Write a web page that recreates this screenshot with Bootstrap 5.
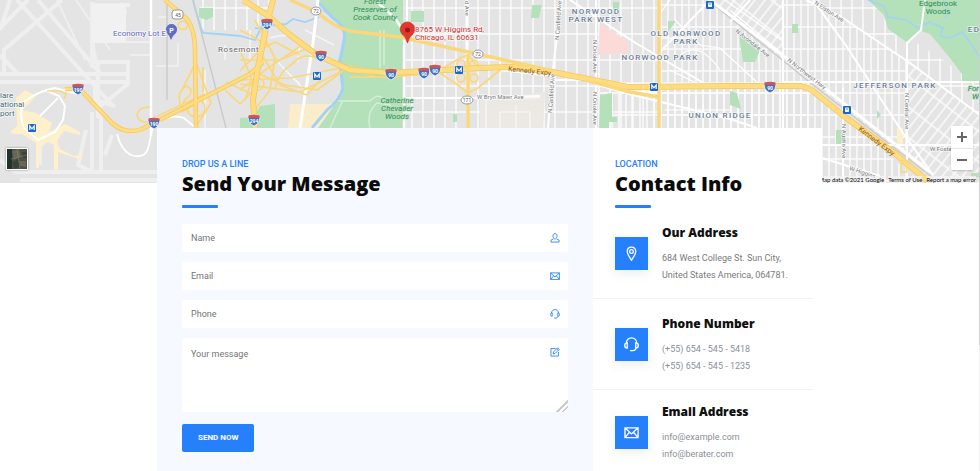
<!DOCTYPE html>
<html lang="en">
<head>
<meta charset="utf-8">
<meta name="viewport" content="width=device-width, initial-scale=1">
<title>Contact</title>
<link rel="stylesheet" href="https://cdn.jsdelivr.net/npm/bootstrap@5.3.0/dist/css/bootstrap.min.css">
<style>
:root{--brand:#2680fc}
html{scrollbar-width:none}
body{font-family:Roboto,"Liberation Sans",sans-serif;font-size:9px;line-height:16px;color:#7a7a7a;background:#fff;border-right:1px solid;border-image:linear-gradient(to bottom,#d0d0d0 345px,#f1f1f1 345px) 1}
.map-area{height:183px;background:#e4e4e4}
.map-svg{display:block;width:100%;height:100%}
.map-svg text{font-family:Roboto,"Liberation Sans",sans-serif}
.map-zoom{right:6px;bottom:13px;width:22px;border-radius:1px;box-shadow:0 1px 2px #0003}
.map-zoom button{height:22px;border:0;background:none;padding:0}
.map-zoom button+button{border-top:1px solid #e6e6e6}
.map-legal{right:3px;bottom:0;font-family:Lato,sans-serif;font-size:6px;line-height:7px;gap:4px;white-space:nowrap}
.map-legal,.map-legal a{color:#000;text-decoration:none}
.map-legal>*{background:#f5f5f5b0}
.sat-thumb{left:6px;bottom:13px;width:22px;height:22px;border:1px solid #fff;padding:0;box-shadow:0 0 2px #0006}
.contact-box{max-width:665px;margin-top:-55px;background:#fff}
.form-side{flex:0 0 436px;background:#f6f9ff;padding:28px 25px 32px}
.info-side{min-width:0;padding:28px 10px 16px 0}
.info-head{padding-left:22px}
.eyebrow{font-size:9px;line-height:16px;font-weight:500;color:var(--brand)}
.box-title{font-family:"Open Sans",sans-serif;font-weight:800;font-size:20px;line-height:24px;color:#0b0b0b;margin:0}
.box-title::after{content:"";display:block;width:36px;height:3px;background:var(--brand);margin-top:9px;border-radius:1px}
.field-list{gap:10px;margin-top:16px}
.field-list .form-control{font-size:9px;line-height:16px;height:28px;padding:6px 32px 6px 9px;border:0;border-radius:2px;background:#fff;color:#444}
.field-list textarea.form-control{height:74px;padding-top:8px}
.field-list textarea::-webkit-resizer{background:linear-gradient(135deg,#0000 60%,#ccc 60%,#ccc 68%,#0000 68%,#0000 78%,#ccc 78%,#ccc 86%,#0000 86%)}
.field-list .form-control::placeholder{color:#757575}
.field-icon{right:8px;top:9px;width:10px;height:10px;color:var(--brand);line-height:0}
.line-icon{display:block;width:100%;height:100%;fill:none;stroke:currentColor;stroke-width:1.4}
.send-btn{margin-top:12px;height:28px;padding:0 16px;border-radius:2px;font-size:8px;font-weight:700;line-height:28px;background:var(--brand);border:0;color:#fff}
.info-item{padding:15px 0 14px 22px;gap:14px}
.info-item:last-child{padding-top:12px}
.info-item+.info-item{border-top:1px solid #f0f1f3}
.info-badge{flex:0 0 33px;height:33px;background:var(--brand);color:#fff;padding:9px;box-shadow:0 3px 10px #2840681a}
.info-name{font-family:"Open Sans",sans-serif;font-weight:800;font-size:12px;line-height:20px;color:#101010;margin:0 0 7px}
.info-item a{color:#8a9097;text-decoration:none}
.info-line{line-height:17px}
</style>
<script src="https://cdn.jsdelivr.net/npm/bootstrap@5.3.0/dist/js/bootstrap.bundle.min.js"></script>
</head>
<body>
<section class="map-area position-relative overflow-hidden" aria-label="Map">
<svg class="map-svg" viewBox="0 0 979 183" preserveAspectRatio="xMidYMid slice">
<defs>
<pattern id="gridA" width="11" height="26" patternUnits="userSpaceOnUse"><path d="M5 0V26M0 8H11" stroke="#fcfcfc" stroke-width="1.500"/></pattern>
<pattern id="gridB" width="7" height="22" patternUnits="userSpaceOnUse"><path d="M3 0V22M0 5H7" stroke="#fbfbfb" stroke-width="1.500"/></pattern>
<pattern id="gridC" width="8" height="24" patternUnits="userSpaceOnUse" patternTransform="rotate(38)"><path d="M3 0V24M0 5H8" stroke="#fbfbfb" stroke-width="1.500"/></pattern>
<g id="shield"><path d="M-5.500-4.500Q0-6 5.500-4.500Q7 3 0 6Q-7 3-5.500-4.500Z" fill="#3f74c0" stroke="#fff" stroke-width=".7"/><path d="M-5.500-4.500Q0-6 5.500-4.500L5.800-2.300H-5.800Z" fill="#d9534f"/></g>
<g id="metro"><rect x="-4" y="-4" width="8" height="8" rx="1" fill="#1967d2"/><path d="M-2.200 2V-2L0 .8L2.200-2V2" fill="none" stroke="#fff" stroke-width="1.200"/></g>
<g id="train"><rect x="-4" y="-4" width="8" height="8" rx="1" fill="#1967d2"/><rect x="-2" y="-2.500" width="4" height="4.500" rx=".8" fill="#fff"/><path d="M-1.200-1H1.200M-2 3L-1 2M2 3L1 2" stroke="#1967d2" stroke-width=".8"/></g>
</defs>
<rect width="980" height="183" fill="#e4e4e4"/>
<!-- street blocks -->
<g>
<rect x="200" width="70" height="30" fill="url(#gridA)"/>
<rect x="405" width="255" height="128" fill="url(#gridA)"/>
<path d="M659 0H710L810 83V128H659Z" fill="url(#gridB)"/>
<path d="M710 0H813L847 47L900 130L926 170L810 83Z" fill="url(#gridC)"/>
<path d="M784 0H813L903 133L908 150L863 123L784 60Z" fill="#e4e4e4"/>
<path d="M784 0H813L903 133L908 150L863 123L784 60Z" fill="url(#gridB)"/>
<path d="M813 0L907 60V145L903 133L847 47Z" fill="url(#gridB)"/>
<path d="M815 0H872L890 26L920 45L980 85V115L910 63Z" fill="url(#gridA)"/>
<path d="M907 62L980 115V183H930L907 145Z" fill="url(#gridC)"/>
<path d="M790 88H805L822 100L922 183H815V128H659V90Z" fill="url(#gridB)"/>
<path d="M600 92H659V128H600Z" fill="url(#gridB)"/>
<path d="M480 100L545 92L543 128H480Z" fill="#ece9e4"/>
<path d="M486 128V104Q486 98 492 98H540M500 128V112H530V128M516 128V105" fill="none" stroke="#f8f8f8"/>
<path d="M270 38Q285 32 300 40L298 62M282 28L309 48M276 60L306 92M250 30V60M225 45V60M205 70V128M285 70L300 84M305 30L334 45M308 52L330 62" fill="none" stroke="#f5f5f5" stroke-width="1.500"/>
</g>
<!-- airfield -->
<g fill="none" stroke="#efeff0" stroke-width="4">
<path d="M17 0L112 105M62 0L4 50V76M38 0L100 73M0 74H130M0 82H126M92 2V68M92 5H130M96 12H127M93 24H125M92 42L96 62H128V84L98 108M95 83V100L115 106M98 60V118M92 112V172M101 110V172M0 160L15 172H157M20 180H157M86 130L78 165L92 172M112 135L105 155M0 30L10 0M28 0L0 28M40 130V165M0 55L18 74"/>
<path d="M57 0L85 60M76 0L110 50M125 42H150M130 55H150" stroke-width="2"/>
</g>
<rect x="92" y="4" width="34" height="39" rx="2" fill="#f1f1f1"/>
<path d="M158 17H166M156 66H178V43" fill="none" stroke="#f7f7f7"/>
<path d="M16 98L25 90L36 96L30 103L22 110L36 113L52 123L49 132L65 124L80 132V135L64 131L57 141L60 149L74 156L82 154V160L58 152V170H54V145L48 142L39 148V168H36V143L22 134L13 134L10 132L17 126Z" fill="#fdf0cb"/>
<path d="M78 94L55 88Q38 91 24 102Q18 113 24 128L38 140L55 132L63 120L65 106L59 96L45 90" fill="none" stroke="#fff" stroke-width="2"/>
<path d="M58 98L40 116M117 134Q121 150 131 155Q146 160 149 145L152 130M152 130Q165 112 184 118L196 128" fill="none" stroke="#fff" stroke-width="1.800"/>
<!-- parks -->
<g fill="#b4e0ba">
<path d="M318 0H403V128H312L330 108L342 92L338 60L345 37L338 22L324 12Z"/>
<path d="M199 8H213V17L206 20L199 17ZM260 106L275 104V128H240V118L254 117ZM411 11H424V22H411ZM532 5H542L539 18H531ZM613 2H619V9H613ZM668 21H676L668 32ZM600 95L612 93V117H617V122H609V128H599ZM792 24H798V33H792ZM739 35L760 50L755 62H743ZM730 91L737 93L741 109L730 105ZM877 110L881 115L877 119ZM836 130H842V144H836ZM453 114H457V122H453ZM971 173H980V177H971Z"/>
<path d="M868 0H980V82H962V74L950 58L930 34L921 31L908 43L888 29L884 15Z"/>
</g>
<path d="M600 23L627 41V53L598 55Z" fill="#fbdad8"/>
<path d="M290 104H335L318 128H288Z" fill="#fbeccb"/>
<path d="M897 128H903V145H897Z" fill="#fdf0cb"/>
<path d="M313 101H370Q380 90 390 105L377 103Q366 112 370 128M380 30V68M384 30V65M330 128L343 100" fill="none" stroke="#d3eed6" stroke-width="1.500"/>
<g fill="none" stroke="#a2d3f5" stroke-width="1.800">
<path d="M193 0Q198 20 203 33L218 34L240 36L255 40L262 26L286 24L293 19L305 22L319 17M255 28L268 30"/>
<path d="M318 2L333 18Q347 28 344 40L340 62L343 88Q340 100 327 110L312 128" stroke-width="3"/>
<path d="M868 0L884 6L888 17L906 20L918 28L930 22L943 28L940 36L950 38L962 32L972 45L980 58M943 0L950 12L945 18" stroke-width="1.500"/>
</g>
<!-- railway lines -->
<path d="M193 0L226 128M167 0V100M708 0L812 84L933 178" fill="none" stroke="#c9cacc" stroke-width="1.400"/>
<!-- main streets -->
<g fill="none" stroke="#fff" stroke-width="2">
<path d="M151 0V136" stroke-width="2.500"/><path d="M318 0L313 43L300 128" stroke-width="3"/>
<path d="M375 0L395 18L404 32V128" stroke-width="2.500"/><path d="M407 0V28"/>
<path d="M467 0V60" stroke-width="3"/><path d="M405 98H467L540 96M562 0L554 60L548 128M596 0V128M570 0L634 42L712 88"/>
<path d="M659 53L710 0M553 80H595L625 93L730 119L757 128M480 68L553 76"/>
<path d="M596 82L625 84H803L812 88M596 84L625 92H660" stroke-width="3"/>
<path d="M710 0L730 15L812 78L930 172" stroke-width="3"/>
<path d="M783 0V128M784 82H980M750 0L730 22M806 0L840 16L910 63L980 115M813 0L847 47L903 133L933 175M925 0L921 30L907 43V183M843 88V183M822 145H980M822 158L880 176"/>
<path d="M675 20L700 45L720 48L760 85M680 55Q700 40 720 70M670 70L700 85M670 0L659 15M659 38H690M665 110H730M730 10L784 55M725 0L784 42" stroke-width="1.200"/>
</g>
<!-- expressways -->
<g fill="none" stroke-linejoin="round">
<g stroke="#fbd77b" stroke-width="1.700">
<path d="M180 105Q177 90 187 86Q194 90 189 96Q180 103 182 112L195 104M196 62L181 92M196 62L206 90L211 103L197 125M203 67V92M137 115Q138 107 150 107M137 115Q139 124 151 122M178 25Q182 17 188 25Q186 32 179 28ZM150 120Q180 105 205 94M47 91H60L66 94L64 99"/>
<path d="M240 71L260 50L275 42L300 55M240 90L268 68L305 43M240 80L290 78L350 66L375 77M240 84L300 92L344 70M240 60L280 60L308 48M250 70L285 85L317 90L342 72M262 55L280 85L307 95L320 80M255 20L275 58L270 90L253 112M275 90Q278 72 295 62M240 50L252 80L245 100M240 30L268 45M290 66Q305 48 322 62M240 104L254 90M225 90L240 104M226 82L250 93"/>
<path d="M340 66L390 72L445 67L460 58L468 55L476 65L500 70L478 88L468 93L455 83L440 73L390 77H350"/>
<circle cx="196" cy="108" r="9"/><circle cx="461" cy="64" r="4"/><circle cx="474" cy="64" r="4"/><circle cx="461" cy="78" r="4"/><circle cx="474" cy="78" r="4"/><circle cx="258" cy="84" r="6"/>
</g>
<g stroke="#f5c75b" stroke-width="4.500"><path d="M65 89H80L91 101L112 123Q125 135 142 129L195 102L250 74L263 62"/><path d="M165 0L187 19Q195 30 195 50L196 128"/><path d="M273 0L267 23L258 67L253 100L255 128M243 0L267 15L290 35L317 55L350 70L390 73L480 68L513 67L553 72L593 80L628 87L730 86H800Q808 87 814 92L845 117L893 152L930 183" stroke-width="6"/></g>
<g stroke="#ffdc80" stroke-width="3"><path d="M65 89H80L91 101L112 123Q125 135 142 129L195 102L250 74L263 62"/><path d="M165 0L187 19Q195 30 195 50L196 128"/><path d="M273 0L267 23L258 67L253 100L255 128M243 0L267 15L290 35L317 55L350 70L390 73L480 68L513 67L553 72L593 80L628 87L730 86H800Q808 87 814 92L845 117L893 152L930 183" stroke-width="4.500"/>
<path d="M290 0L317 12Q335 28 350 31L400 37L473 53L553 71M468 54V128M659 0V128M593 82L630 92L659 97" stroke="#fbd77b" stroke-width="3.500"/>
<path d="M901 172V160L907 162V172Z" stroke="#fbd77b" stroke-width="1.500"/></g>
</g>
<!-- route markers -->
<use href="#shield" x="78" y="89"/><use href="#shield" x="154" y="123"/><use href="#shield" x="267" y="24"/><use href="#shield" x="254" y="120"/><use href="#shield" x="321" y="56"/><use href="#shield" x="391" y="74"/><use href="#shield" x="424" y="73"/><use href="#shield" x="435" y="70"/><use href="#shield" x="770" y="87"/>
<g fill="#fff" font-size="5" font-weight="700" text-anchor="middle"><text x="78" y="92">190</text><text x="154" y="126">190</text><text x="267" y="27">294</text><text x="254" y="123">294</text><text x="321" y="59">90</text><text x="391" y="77">90</text><text x="424" y="76">90</text><text x="435" y="73">90</text><text x="770" y="90">90</text></g>
<use href="#metro" x="32" y="128"/><use href="#metro" x="317" y="76"/><use href="#metro" x="459" y="70"/><use href="#metro" x="654" y="87"/><use href="#train" x="710" y="5"/><use href="#train" x="847" y="110"/>
<g fill="#fff" stroke="#999"><rect x="172" y="10" width="11" height="9" rx="3"/><ellipse cx="316" cy="11" rx="5" ry="4"/><ellipse cx="478" cy="54" rx="5" ry="4"/><ellipse cx="467" cy="100" rx="6" ry="4"/></g>
<g fill="#555" font-size="5" text-anchor="middle"><text x="178" y="17">45</text><text x="316" y="13">72</text><text x="478" y="56">72</text><text x="467" y="102">171</text></g>
<path d="M171 40Q169 35 167 33A5.600 5.600 0 1 1 176 33Q173 35 171 40Z" fill="#5f6dc4"/><text x="171.500" y="33" fill="#fff" font-size="7" font-weight="700" text-anchor="middle">P</text>
<path d="M407.500 43Q406 37 402 34A7.300 7.300 0 1 1 413 34Q409 37 407.500 43Z" fill="#e2372c" stroke="#b3261e" stroke-width=".6"/><circle cx="407.500" cy="30" r="2.500" fill="#9c1913"/>
<!-- place names -->
<g stroke="#fff" stroke-opacity=".7" stroke-width="1.500" paint-order="stroke">
<g font-size="8" fill="#46687c"><text x="0" y="98">lare</text><text x="0" y="107">ational</text><text x="0" y="116">port</text></g>
<text x="113" y="36" font-size="8" fill="#5b68bd">Economy Lot E</text>
<text x="218" y="52" font-size="8" fill="#666" letter-spacing=".6">Rosemont</text>
<g font-size="8" font-style="italic" fill="#2f8a57" text-anchor="middle" stroke="#b4e0ba"><text x="375" y="4">Forest</text><text x="375" y="12">Preserves of</text><text x="375" y="20">Cook County</text><text x="397" y="103">Catherine</text><text x="397" y="111">Chevalier</text><text x="397" y="119">Woods</text></g>
<g font-size="8" font-style="italic" fill="#2f8a57" text-anchor="end" stroke="#b4e0ba"><text x="979" y="91">For</text><text x="979" y="99">W</text></g>
<g font-size="8" fill="#2f8a57" text-anchor="middle" stroke="#b4e0ba"><text x="938" y="6">Edgebrook</text><text x="938" y="14">Woods</text></g>
<g font-size="8" fill="#d0312b"><text x="415" y="32">8765 W Higgins Rd,</text><text x="415" y="40">Chicago, IL 60631</text></g>
<g font-size="8" font-weight="500" fill="#6b7d97" letter-spacing="1.300" text-anchor="middle"><text x="596" y="14">NORWOOD</text><text x="596" y="22">PARK WEST</text><text x="686" y="36">OLD NORWOOD</text><text x="686" y="44">PARK</text><text x="660" y="60">NORWOOD PARK</text><text x="720" y="118">UNION RIDGE</text><text x="895" y="88">JEFFERSON PARK</text><text x="974" y="32">ED</text></g>
<g font-size="6" fill="#777"><text x="477" y="99">W Bryn Mawr Ave</text><text transform="translate(559 40) rotate(-86)">N Canfield Ave</text><text transform="translate(552 113) rotate(-86)">N Canfield Ave</text><text transform="translate(593 40) rotate(90)">N Oriole Ave</text><text transform="translate(593 92) rotate(90)">N Oriole Ave</text><text transform="translate(735 32) rotate(38)">N Avondale Ave</text><text transform="translate(787 61) rotate(38)">N Northwest Hwy</text><text transform="translate(814 4) rotate(33)">N Elston Ave</text><text transform="translate(905 93) rotate(90)">N Central Ave</text><text transform="translate(842 124) rotate(90)">N Austin Ave</text><text x="930" y="151">W Foste</text><text transform="translate(849 170) rotate(18)">W Higgins</text><text transform="translate(465 1) rotate(90)">d Ave</text></g>
</g>
<g font-size="7" fill="#8b5a1c"><text transform="translate(508 71) rotate(6)">Kennedy Expy</text><text transform="translate(858 130) rotate(37)">Kennedy Expy</text></g>
</svg>
<button type="button" class="sat-thumb position-absolute overflow-hidden" aria-label="Show satellite imagery"><svg class="d-block" viewBox="0 0 20 20"><rect width="20" height="20" fill="#504f43"/><path d="M0 0H5V20H0Z" fill="#20332c"/><path d="M5 2L12 0L14 7L7 11ZM12 12H19V18L13 17Z" fill="#6a6657"/><path d="M6 13L11 10L13 18L7 20ZM15 3H20V9H16Z" fill="#38443a"/><path d="M4 10L20 6M10 0L13 20" stroke="#857f70" stroke-width=".6"/></svg></button>
<div class="map-zoom position-absolute d-flex flex-column bg-white"><button type="button" aria-label="Zoom in"><svg class="d-block mx-auto" width="12" height="12" viewBox="0 0 12 12"><path d="M1 6H11M6 1V11" stroke="#666" stroke-width="2"/></svg></button><button type="button" aria-label="Zoom out"><svg class="d-block mx-auto" width="12" height="12" viewBox="0 0 12 12"><path d="M1 6H11" stroke="#666" stroke-width="2"/></svg></button></div>
<div class="map-legal position-absolute d-flex"><span>Map data ©2021 Google</span><a href="#">Terms of Use</a><a href="#">Report a map error</a></div>
</section>

<svg class="d-none">
<symbol id="i-user" viewBox="0 0 16 16"><path d="M8 1C5.500 1 4.500 3 4.800 5.300C5 7.600 6.200 9.500 8 9.500S11 7.600 11.200 5.300C11.500 3 10.500 1 8 1ZM5.500 9.500L1.500 11.500V14.500H14.500V11.500L10.500 9.500"/></symbol>
<symbol id="i-mail" viewBox="0 0 16 16"><path d="M1 3H15V13.500H1ZM1 3L8 9.500L15 3M1 13.500L5.800 7.700M15 13.500L10.200 7.700"/></symbol>
<symbol id="i-headset" viewBox="0 0 16 16"><path d="M2.500 7V6.500C2.500 3 5 1 8 1S13.500 3 13.500 6.500V7M3.500 6.200C1.500 6.200 .8 7.500 .8 9S1.500 11.800 3.500 11.800ZM12.500 6.200C14.500 6.200 15.200 7.500 15.200 9S14.500 11.800 12.500 11.800ZM13 11.800C12.500 13.500 11 14.500 9.500 14.500M6.500 14.500H9.800"/></symbol>
<symbol id="i-edit" viewBox="0 0 16 16"><path d="M9 2.500H1.500V14.500H13.500V8M5 11L5.700 7.800L12.300 1.200L14.800 3.700L8.200 10.300ZM10.800 2.700L13.300 5.200"/></symbol>
<symbol id="i-pin" viewBox="0 0 16 16"><path d="M8 15.200C6.500 12 3.500 9.500 3.500 5.800C3.500 3 5.500 1.200 8 1.200S12.500 3 12.500 5.800C12.500 9.500 9.500 12 8 15.200Z"/><circle cx="8" cy="5.900" r="2"/></symbol>
</svg>

<main class="contact-box position-relative mx-auto d-flex">
<section class="form-side">
<div class="eyebrow">DROP US A LINE</div>
<h2 class="box-title">Send Your Message</h2>
<form>
<div class="field-list d-flex flex-column">
<div class="position-relative"><input class="form-control" type="text" placeholder="Name" aria-label="Name"><span class="field-icon position-absolute"><svg class="line-icon"><use href="#i-user"/></svg></span></div>
<div class="position-relative"><input class="form-control" type="email" placeholder="Email" aria-label="Email"><span class="field-icon position-absolute"><svg class="line-icon"><use href="#i-mail"/></svg></span></div>
<div class="position-relative"><input class="form-control" type="tel" placeholder="Phone" aria-label="Phone"><span class="field-icon position-absolute"><svg class="line-icon"><use href="#i-headset"/></svg></span></div>
<div class="position-relative"><textarea class="form-control" placeholder="Your message" aria-label="Your message"></textarea><span class="field-icon position-absolute"><svg class="line-icon"><use href="#i-edit"/></svg></span></div>
</div>
<button type="submit" class="btn send-btn">SEND NOW</button>
</form>
</section>
<section class="info-side flex-grow-1">
<div class="info-head"><div class="eyebrow">LOCATION</div>
<h2 class="box-title">Contact Info</h2></div>
<div class="info-list">
<div class="info-item d-flex align-items-center"><div class="info-badge"><svg class="line-icon"><use href="#i-pin"/></svg></div><div><h3 class="info-name">Our Address</h3><div class="info-line">684 West College St. Sun City,<br>United States America, 064781.</div></div></div>
<div class="info-item d-flex align-items-center"><div class="info-badge"><svg class="line-icon"><use href="#i-headset"/></svg></div><div><h3 class="info-name">Phone Number</h3><div class="info-line"><a href="#">(+55) 654 - 545 - 5418</a><br><a href="#">(+55) 654 - 545 - 1235</a></div></div></div>
<div class="info-item d-flex align-items-center"><div class="info-badge"><svg class="line-icon"><use href="#i-mail"/></svg></div><div><h3 class="info-name">Email Address</h3><div class="info-line"><a href="#">info@example.com</a><br><a href="#">info@berater.com</a></div></div></div>
</div>
</section>
</main>
</body>
</html>
